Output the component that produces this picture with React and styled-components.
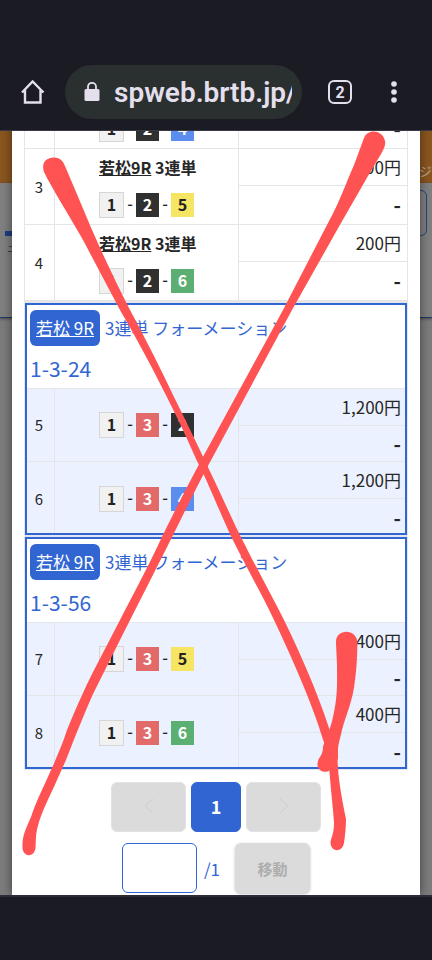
import React, { useState } from "react";
import styled, { createGlobalStyle, css } from "styled-components";

const GlobalStyle = createGlobalStyle`
  * {
    box-sizing: border-box;
  }

  body {
    margin: 0;
    background: #1b1b24;
    color: #262626;
    font-family: "Noto Sans CJK JP", sans-serif;
  }

  button,
  input {
    font-family: inherit;
  }
`;

const Page = styled.div`
  position: relative;
  display: flex;
  flex-direction: column;
  min-height: 100vh;
  overflow: hidden;
`;

/* ---------- browser bar ---------- */

const BrowserBar = styled.header`
  display: flex;
  align-items: center;
  gap: 18px;
  padding: 65px 20px 11px;
  background: #1b1b24;
  border-bottom: 1px solid #3a3846;
`;

const IconButton = styled.button`
  display: flex;
  align-items: center;
  justify-content: center;
  width: 26px;
  height: 40px;
  padding: 0;
  border: 0;
  background: none;
  color: #e3dfec;
`;

const Actions = styled.div`
  display: flex;
  gap: 29px;
  margin-left: 8px;
  margin-right: 5px;
`;

const AddressBar = styled.label`
  display: flex;
  flex: 1;
  align-items: center;
  gap: 14px;
  min-width: 0;
  height: 54px;
  margin-left: 1px;
  padding: 0 10px 0 19px;
  border-radius: 27px;
  background: #2a2f2f;
`;

const AddressInput = styled.input`
  flex: 1;
  min-width: 0;
  height: 40px;
  padding: 0;
  border: 0;
  outline: 0;
  background: none;
  color: #e3dfec;
  font-family: Roboto, sans-serif;
  font-size: 28px;
  font-weight: 600;
`;

const TabButton = styled(IconButton)`
  width: 24px;
  height: 24px;
  margin: 8px 0;
  border: 2px solid #e3dfec;
  border-radius: 6px;
  font-family: Roboto, sans-serif;
  font-size: 16px;
  font-weight: 700;
`;

/* ---------- page behind the dialog ---------- */

const Viewport = styled.main`
  display: grid;
  flex: 1;
  overflow: hidden;
  background: #7c7c7c;
`;

const Backdrop = styled.div`
  grid-area: 1 / 1;
`;

const SiteHeader = styled.div`
  display: flex;
  align-items: center;
  justify-content: flex-end;
  height: 52px;
  padding-top: 26px;
  background: #8a5620;
  color: #b9aa96;
  font-size: 13px;
`;

const SiteTools = styled.div`
  display: flex;
  align-items: flex-start;
  justify-content: space-between;
  height: 135px;
  padding: 7px 5px 0;
  border-bottom: 1px solid #20396f;
  background: #808080;
  box-shadow: 0 1px 3px rgba(0, 0, 0, 0.4);
`;

const SiteTab = styled.div`
  width: 60px;
  margin-top: 41px;
  padding-left: 2px;
  border-top: 5px solid #1d3f86;
  color: #333;
  font-size: 10px;
  line-height: 26px;
`;

const SiteBox = styled.div`
  width: 60px;
  height: 46px;
  border: 1px solid #25457f;
  border-radius: 6px;
`;

/* ---------- dialog ---------- */

const Dialog = styled.section`
  grid-area: 1 / 1;
  margin: -59px 12px 0;
  padding: 0 12px;
  background: #fff;
  box-shadow: 0 0 10px rgba(0, 0, 0, 0.5);
`;

const BetTable = styled.table`
  width: 100%;
  table-layout: fixed;
  border-collapse: separate;
  border-spacing: 0;
  border: 1px solid #e6e6e6;
`;

const GroupFrame = styled.div`
  margin: ${({ $first }) => ($first ? "1px" : "2px")} 1px 0;
  border: 2px solid #3166d2;
  outline: 1px solid #e3e6ee;
  background: #ebf1fe;

  ${BetTable} {
    border: 0;
  }
`;

const NumberCol = styled.col`
  width: ${({ $group }) => ($group ? "28px" : "30px")};
`;

const AmountCol = styled.col`
  width: 44%;
`;

const Cell = styled.td`
  padding: ${({ $last }) => ($last ? "3px 0 0" : "0")};
  border-bottom: ${({ $last }) => ($last ? "0" : "1px solid #e3e5e8")};
`;

const NumberCell = styled(Cell)`
  padding-right: ${({ $single }) => ($single ? "1px" : "3px")};
  border-right: 1px solid #e3e5e8;
  font-size: 15px;
  line-height: 22px;
  text-align: center;
`;

const BetCell = styled(Cell)`
  padding-left: 44px;
  border-right: 1px solid #e3e5e8;
`;

const AmountCell = styled(Cell)`
  height: 37px;
  padding-right: ${({ $single }) => ($single ? "6px" : "4px")};
  font-size: 17px;
  line-height: 24px;
  text-align: right;
`;

const resultHeight = ({ $single, $last }) => {
  if ($single) return "39px";
  return $last ? "34px" : "36px";
};

const ResultCell = styled(AmountCell)`
  height: ${resultHeight};
  font-size: 20px;
  font-weight: 700;
`;

const RaceTitle = styled.div`
  margin-bottom: 13px;
  font-size: 16px;
  font-weight: 700;
  line-height: 24px;
  white-space: nowrap;
`;

const RaceLink = styled.a`
  color: inherit;
  text-decoration: underline;
`;

const Numbers = styled.div`
  display: flex;
  align-items: center;
  font-size: 16px;
  line-height: 22px;
`;

const Dash = styled.span`
  width: 12px;
  padding-bottom: 4px;
  font-weight: 500;
  text-align: center;
`;

const chipColors = {
  1: ["#f1f1f1", "#222"],
  2: ["#303030", "#fff"],
  3: ["#e26a68", "#fff"],
  4: ["#5b8def", "#fff"],
  5: ["#f6e463", "#222"],
  6: ["#5baf72", "#fff"],
};

const Chip = styled.span`
  width: 23px;
  height: 24px;
  background: ${({ $n }) => chipColors[$n][0]};
  color: ${({ $n }) => chipColors[$n][1]};
  font-weight: 700;
  text-align: center;

  ${({ $n }) =>
    $n === 1 &&
    css`
      width: 25px;
      height: 26px;
      border: 1px solid #d6d6d6;
    `}
`;

const GroupHead = styled.th`
  height: 84px;
  padding: 5px 3px 0;
  border-bottom: 1px solid #e3e5e8;
  background: #fff;
  color: #3166d2;
  font-weight: 400;
  text-align: left;
  vertical-align: top;
`;

const GroupTitle = styled.div`
  display: flex;
  align-items: center;
  gap: 5px;
  font-size: 17px;
  line-height: 36px;
  white-space: nowrap;
`;

const RaceBadge = styled.a`
  padding: 0 6px;
  border-radius: 6px;
  background: #3166d2;
  color: #fff;
  text-decoration: underline;
`;

const Combination = styled.div`
  margin-top: 6px;
  font-size: 21px;
  line-height: 32px;
`;

const Pager = styled.nav`
  display: flex;
  justify-content: center;
  gap: 5px;
  margin-top: 13px;
`;

const PagerButton = styled.button`
  display: flex;
  align-items: center;
  justify-content: center;
  width: ${({ $current }) => ($current ? "50px" : "75px")};
  height: 50px;
  padding: 0 0 2px;
  border: 1px solid ${({ $current }) => ($current ? "#3166d2" : "#e2e2e2")};
  border-radius: 6px;
  background: ${({ $current }) => ($current ? "#3166d2" : "#dbdbdb")};
  color: ${({ $current }) => ($current ? "#fff" : "#cdcdcd")};
  font-size: 18px;
  font-weight: 700;
`;

const JumpForm = styled.form`
  display: flex;
  align-items: center;
  justify-content: center;
  margin-top: 11px;
`;

const PageLabel = styled.label`
  display: flex;
  align-items: center;
  gap: 7px;
  color: #3166d2;
  font-size: 17px;
`;

const PageInput = styled.input`
  width: 75px;
  height: 50px;
  border: 1px solid #3166d2;
  border-radius: 6px;
  background: #fff;
  color: #3166d2;
  font-size: 17px;
  text-align: center;
`;

const MoveButton = styled.button`
  width: 75px;
  height: 50px;
  margin-left: 15px;
  padding: 0;
  border: 0;
  border-radius: 6px;
  background: #dbdbdb;
  color: #adadad;
  font-size: 15px;
  font-weight: 700;
  box-shadow: 0 1px 3px rgba(0, 0, 0, 0.25);
`;

const NavigationBar = styled.footer`
  height: 65px;
  border-top: 2px solid #2d2d37;
  background: #1b1b24;
`;

const Scribble = styled.svg`
  position: absolute;
  top: 0;
  left: 0;
  width: 100%;
  height: 960px;
  pointer-events: none;
`;

const singles = [
  { no: 2, numbers: [1, 2, 4], amount: "200円" },
  { no: 3, numbers: [1, 2, 5], amount: "200円" },
  { no: 4, numbers: [1, 2, 6], amount: "200円" },
];

const groups = [
  {
    combination: "1-3-24",
    bets: [
      { no: 5, numbers: [1, 3, 2], amount: "1,200円" },
      { no: 6, numbers: [1, 3, 4], amount: "1,200円" },
    ],
  },
  {
    combination: "1-3-56",
    bets: [
      { no: 7, numbers: [1, 3, 5], amount: "400円" },
      { no: 8, numbers: [1, 3, 6], amount: "400円" },
    ],
  },
];

function Columns({ group }) {
  return (
    <colgroup>
      <NumberCol $group={group} />
      <col />
      <AmountCol />
    </colgroup>
  );
}

function BetRows({ bet, single, last }) {
  return (
    <>
      <tr>
        <NumberCell rowSpan={2} $single={single} $last={last}>
          {bet.no}
        </NumberCell>
        <BetCell rowSpan={2} $last={last}>
          {single && (
            <RaceTitle>
              <RaceLink href="#race">若松9R</RaceLink> 3連単
            </RaceTitle>
          )}
          <Numbers>
            {bet.numbers.map((n, i) => (
              <React.Fragment key={n}>
                {i > 0 && <Dash>-</Dash>}
                <Chip $n={n}>{n}</Chip>
              </React.Fragment>
            ))}
          </Numbers>
        </BetCell>
        <AmountCell $single={single}>{bet.amount}</AmountCell>
      </tr>
      <tr>
        <ResultCell $single={single} $last={last}>
          -
        </ResultCell>
      </tr>
    </>
  );
}

function Marks() {
  return (
    <Scribble viewBox="0 0 432 960" fill="#ff5353" aria-hidden="true">
      <path d="M44 172C41 163 46 157.500 54 157.500C60 157.500 63 161 65 166L79 199C94 236 111 273 130 310C146 340 160 367 173 395C188 425 200 450 216 484L236 527C253 562 271 594 284 620C300 653 317 691 329 728C335 742 337 751 338 768C339 784 343 804 346 819C346 827 345 836 344 843C342 853 331 852 330.500 843C330.500 838 334 835 334 823C333 806 330 783 329 765C327 747 322 738 319 727C308 694 291 656 274 620C260 590 239 555 225 523C213 496 206 478 197 461L192 450C179 420 166 395 151 366C141 347 131 329 120 310L83 240C69 215 54 192 44 172Z" />
      <path d="M364 138C368 128 383 130 385 141C386 146 383 150 381 154L368 176L341 223L292 310L250 388L216 451C195 489 178 526 160 561L125 630L93 694C83 717 76 734 66 760L57 780C49 799 38 817 36 836L35.500 848C34 858 23 857 22.500 848C22 836 25 831 31 817C36 802 42 790 47 779C56 759 61 748 67 730C77 706 84 690 93 672L120 620C130 600 146 571 160 541C176 508 195 471 216 433L283 310L328 223C340 201 346 183 354 165Z" />
      <path d="M336 643C335 628 357 628 357.500 643C357 656 357 666 355 680C353 701 346 714 342 730C340 739 338 745 338 750L338 758C336 767 334 767 331 769C326 775 315 771 318 761C319 757 323 755 323 747C325 739 331 728 333 717C338 695 337 681 337 665Z" />
    </Scribble>
  );
}

function App() {
  const [page, setPage] = useState("");

  return (
    <>
      <GlobalStyle />
      <Page>
        <BrowserBar>
          <IconButton aria-label="Home">
            <svg width="26" height="26" viewBox="0 0 26 26" fill="none" stroke="currentColor" strokeWidth="2.400">
              <path d="M2 13.500L12.600 2.500L23.500 13.500M5 11V23.500H20.500V11" />
            </svg>
          </IconButton>
          <AddressBar>
            <svg width="16" height="20" viewBox="0 0 16 20" fill="none" aria-hidden="true">
              <rect x="0.500" y="7" width="15" height="12" rx="1.500" fill="#e3dfec" />
              <path d="M4 8V4.500a4 3.700 0 0 1 8 0V8" stroke="#e3dfec" strokeWidth="1.800" />
            </svg>
            <AddressInput aria-label="Address" defaultValue="spweb.brtb.jp/" />
          </AddressBar>
          <Actions>
            <TabButton aria-label="Tabs">2</TabButton>
            <IconButton aria-label="Menu">
              <svg width="6" height="22" viewBox="0 0 6 22" fill="currentColor">
                <circle cx="3" cy="3" r="2.800" />
                <circle cx="3" cy="11" r="2.800" />
                <circle cx="3" cy="19" r="2.800" />
              </svg>
            </IconButton>
          </Actions>
        </BrowserBar>

        <Viewport>
          <Backdrop>
            <SiteHeader>ジ</SiteHeader>
            <SiteTools>
              <SiteTab>ニ</SiteTab>
              <SiteBox />
            </SiteTools>
          </Backdrop>

          <Dialog>
            <BetTable>
              <Columns />
              <tbody>
                {singles.map((bet) => (
                  <BetRows key={bet.no} bet={bet} single />
                ))}
              </tbody>
            </BetTable>

            {groups.map((group, index) => (
              <GroupFrame key={group.combination} $first={index === 0}>
                <BetTable>
                  <Columns group />
                  <thead>
                    <tr>
                      <GroupHead colSpan={3}>
                        <GroupTitle>
                          <RaceBadge href="#race">若松 9R</RaceBadge>
                          <span>3連単 フォーメーション</span>
                        </GroupTitle>
                        <Combination>{group.combination}</Combination>
                      </GroupHead>
                    </tr>
                  </thead>
                  <tbody>
                    {group.bets.map((bet, i) => (
                      <BetRows key={bet.no} bet={bet} last={i === group.bets.length - 1} />
                    ))}
                  </tbody>
                </BetTable>
              </GroupFrame>
            ))}

            <Pager>
              <PagerButton aria-label="Previous" disabled>
                <svg width="10" height="16" viewBox="0 0 10 16" fill="none" stroke="currentColor">
                  <path d="M9 1L1 8L9 15" />
                </svg>
              </PagerButton>
              <PagerButton $current>1</PagerButton>
              <PagerButton aria-label="Next" disabled>
                <svg width="10" height="16" viewBox="0 0 10 16" fill="none" stroke="currentColor">
                  <path d="M1 1L9 8L1 15" />
                </svg>
              </PagerButton>
            </Pager>

            <JumpForm onSubmit={(e) => e.preventDefault()}>
              <PageLabel>
                <PageInput
                  aria-label="Page"
                  value={page}
                  onChange={(e) => setPage(e.target.value)}
                />
                /1
              </PageLabel>
              <MoveButton disabled>移動</MoveButton>
            </JumpForm>
          </Dialog>
        </Viewport>

        <NavigationBar />
        <Marks />
      </Page>
    </>
  );
}

export default App;
